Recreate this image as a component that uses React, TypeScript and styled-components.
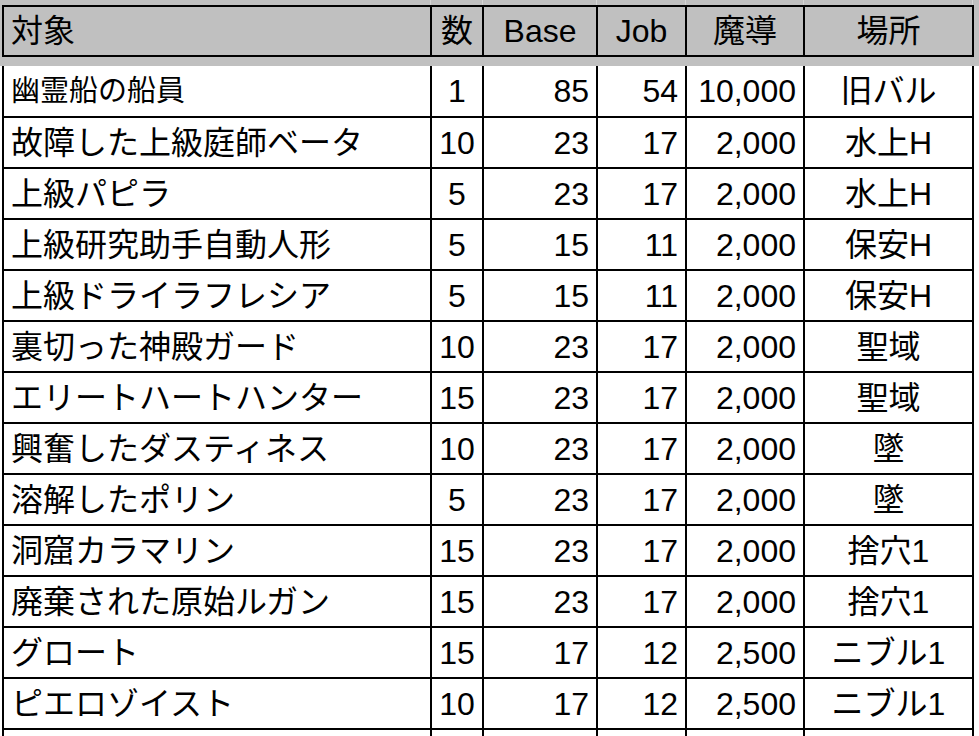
import React from 'react'
import styled, { createGlobalStyle } from 'styled-components'

const GlobalStyle = createGlobalStyle`
  html, body {
    margin: 0;
    padding: 0;
    background: #ffffff;
    overflow: hidden;
  }
  body {
    font-family: 'Liberation Sans', 'Noto Sans CJK JP', sans-serif;
    color: #000000;
  }
`

const COLS = [428, 52, 114, 89, 118, 169]

type Align = 'left' | 'center' | 'right'

interface Row {
  name: string
  count: string
  base: string
  job: string
  magic: string
  place: string
  small?: boolean
}

const rows: Row[] = [
  { name: '幽霊船の船員', count: '1', base: '85', job: '54', magic: '10,000', place: '旧バル', small: true },
  { name: '故障した上級庭師ベータ', count: '10', base: '23', job: '17', magic: '2,000', place: '水上H' },
  { name: '上級パピラ', count: '5', base: '23', job: '17', magic: '2,000', place: '水上H' },
  { name: '上級研究助手自動人形', count: '5', base: '15', job: '11', magic: '2,000', place: '保安H' },
  { name: '上級ドライラフレシア', count: '5', base: '15', job: '11', magic: '2,000', place: '保安H' },
  { name: '裏切った神殿ガード', count: '10', base: '23', job: '17', magic: '2,000', place: '聖域' },
  { name: 'エリートハートハンター', count: '15', base: '23', job: '17', magic: '2,000', place: '聖域' },
  { name: '興奮したダスティネス', count: '10', base: '23', job: '17', magic: '2,000', place: '墜' },
  { name: '溶解したポリン', count: '5', base: '23', job: '17', magic: '2,000', place: '墜' },
  { name: '洞窟カラマリン', count: '15', base: '23', job: '17', magic: '2,000', place: '捨穴1' },
  { name: '廃棄された原始ルガン', count: '15', base: '23', job: '17', magic: '2,000', place: '捨穴1' },
  { name: 'グロート', count: '15', base: '17', job: '12', magic: '2,500', place: 'ニブル1' },
  { name: 'ピエロゾイスト', count: '10', base: '17', job: '12', magic: '2,500', place: 'ニブル1' },
  { name: '', count: '', base: '', job: '', magic: '', place: '' },
]

const Sheet = styled.div`
  width: 979px;
  height: 736px;
  overflow: hidden;
`

const HeaderBand = styled.div`
  background: #c0c0c0;
  padding-bottom: 9px;
`

const GuideStrip = styled.div`
  display: grid;
  grid-template-columns: ${COLS.map((w) => `${w}px`).join(' ')};
  height: 5px;
  margin-left: 3px;
`

const Guide = styled.div`
  border-right: 1px solid #d6d6d6;
`

const Table = styled.table`
  border-collapse: collapse;
  table-layout: fixed;
  margin-left: 2px;
  width: ${COLS.reduce((a, b) => a + b, 0) + 2}px;
`

const Cell = styled.td<{ $align: Align; $small?: boolean }>`
  border: 2px solid #000000;
  height: 51px;
  padding: 0 7px 0 7px;
  box-sizing: border-box;
  font-size: ${(p) => (p.$small ? '29px' : '32px')};
  line-height: 1;
  text-align: ${(p) => p.$align};
  vertical-align: middle;
  white-space: nowrap;
  overflow: hidden;
`

const HeadCell = styled(Cell)`
  height: 50px;
  background: #c0c0c0;
  font-weight: normal;
`

const BodyRow = styled.tr`
  &:first-child td {
    border-top: none;
  }
`

const Cols = () => (
  <colgroup>
    {COLS.map((w, i) => (
      <col key={i} style={{ width: w }} />
    ))}
  </colgroup>
)

export default function App() {
  return (
    <>
      <GlobalStyle />
      <Sheet>
        <HeaderBand>
          <GuideStrip>
            {COLS.map((_, i) => (
              <Guide key={i} />
            ))}
          </GuideStrip>
          <Table>
            <Cols />
            <thead>
              <tr>
                <HeadCell as="th" $align="left">対象</HeadCell>
                <HeadCell as="th" $align="center">数</HeadCell>
                <HeadCell as="th" $align="center">Base</HeadCell>
                <HeadCell as="th" $align="center">Job</HeadCell>
                <HeadCell as="th" $align="center">魔導</HeadCell>
                <HeadCell as="th" $align="center">場所</HeadCell>
              </tr>
            </thead>
          </Table>
        </HeaderBand>
        <Table>
          <Cols />
          <tbody>
            {rows.map((r, i) => (
              <BodyRow key={i}>
                <Cell $align="left" $small={r.small}>{r.name}</Cell>
                <Cell $align="center">{r.count}</Cell>
                <Cell $align="right">{r.base}</Cell>
                <Cell $align="right">{r.job}</Cell>
                <Cell $align="right">{r.magic}</Cell>
                <Cell $align="center">{r.place}</Cell>
              </BodyRow>
            ))}
          </tbody>
        </Table>
      </Sheet>
    </>
  )
}
